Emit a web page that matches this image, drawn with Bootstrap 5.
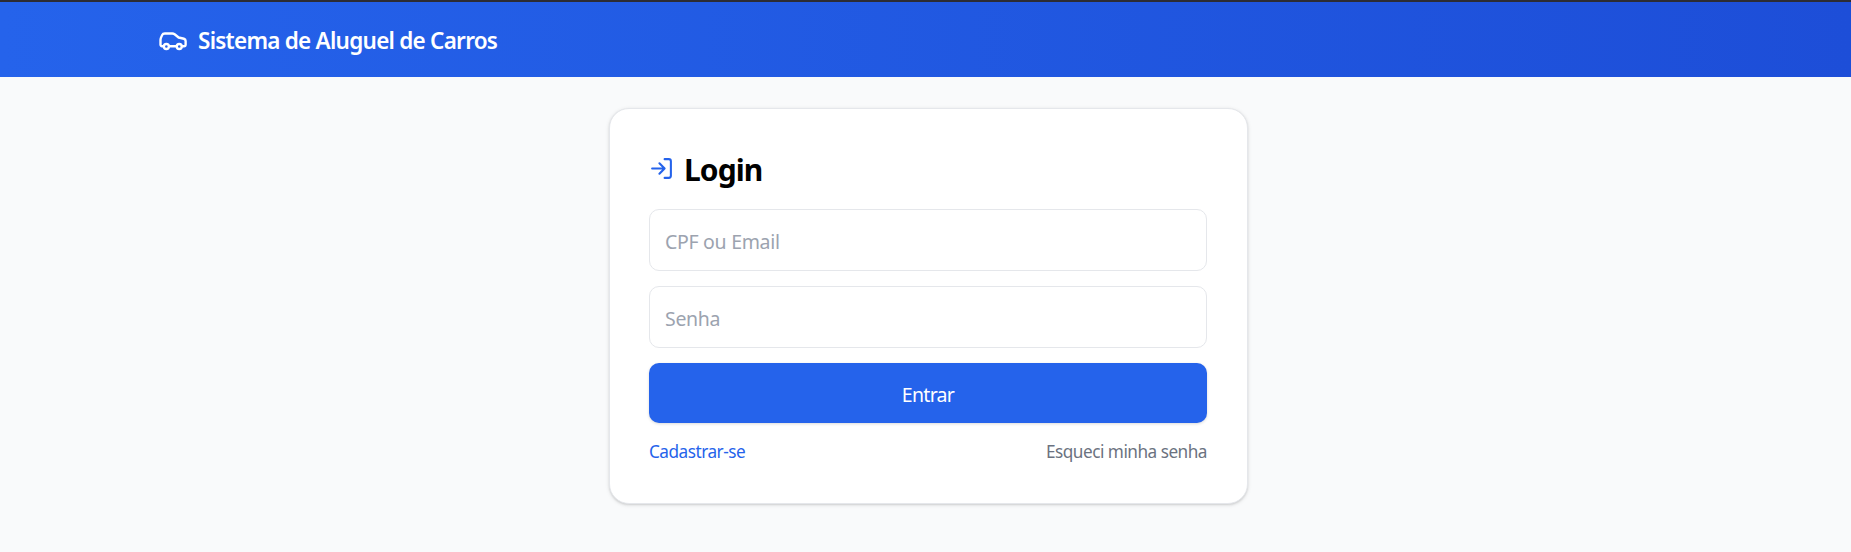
<!DOCTYPE html>
<html lang="pt-BR">
<head>
<meta charset="utf-8">
<meta name="viewport" content="width=device-width, initial-scale=1">
<title>Sistema de Aluguel de Carros</title>
<link href="https://cdn.jsdelivr.net/npm/bootstrap@5.3.0/dist/css/bootstrap.min.css" rel="stylesheet">
<style>
body { background: #f9fafb; font-family: "Segoe UI", "Noto Sans", sans-serif; font-size: 20px; min-height: 552px; }
.app-header { height: 77px; border-top: 2px solid #2c2c34; background: linear-gradient(90deg, #2563eb, #1d4ed8); padding-left: 158px; gap: 10px; }
.app-title { font-size: 22.5px; font-weight: 600; line-height: 30px; letter-spacing: -.75px; padding-top: 2px; }
.login-card { width: 639px; height: 396px; margin: 31px 0 0 608.5px; padding: 40px 39.5px; border: 1px solid #e5e7eb; border-radius: 20px; box-shadow: 0 1px 4px rgba(0,0,0,.1), 0 1px 2px rgba(0,0,0,.1); }
.login-title { font-size: 30px; font-weight: 700; line-height: 40px; color: #000; gap: 10px; margin-bottom: 20px; letter-spacing: -.9px; }
.login-title svg { color: #2563eb; margin-top: -2px; }
.login-title span { padding-top: 1px; margin-bottom: -1px; }
.login-form { gap: 15px; }
.login-form .form-control { height: 62px; padding: 3px 15px 0; font-size: 19.5px; border: 1px solid #e5e7eb; border-radius: 10px; letter-spacing: -.3px; }
.login-form .form-control::placeholder { color: #9ca3af; }
.btn-enter { height: 60px; padding: 3px 0 0; font-size: 19.5px; color: #fff; background: #2563eb; border: 0; border-radius: 10px; letter-spacing: -.7px; box-shadow: 0 1px 3px rgba(0,0,0,.15); }
.btn-enter:hover { background: #1d4ed8; color: #fff; }
.login-links { font-size: 17.2px; line-height: 25px; letter-spacing: -.5px; padding-top: 1px; }
.login-links a { color: #2563eb; }
.login-links a.forgot { color: #6b7280; }
</style>
</head>
<body>
<header class="app-header d-flex align-items-center text-white">
  <svg width="30" height="30" viewBox="0 0 24 24" fill="none" stroke="currentColor" stroke-width="1.9" stroke-linecap="round" stroke-linejoin="round" aria-hidden="true"><path d="M4.4 17H3.2a1.2 1.2 0 0 1-1.2-1.3V12c0-.7.1-1.2.4-1.9l1-2.2C3.8 7 4.5 6.8 5.4 6.8h6.1c.7 0 1.2.2 1.8.6l3.2 2.6 4.2 1c.9.3 1.4.9 1.4 1.8V15.6c0 .9-.5 1.4-1.3 1.4h-1.6M8.9 17h5.8"/><circle cx="6.7" cy="17.2" r="2"/><circle cx="17" cy="17.2" r="2"/></svg>
  <span class="app-title">Sistema de Aluguel de Carros</span>
</header>
<main>
  <section class="login-card bg-white">
    <h1 class="login-title d-flex align-items-center">
      <svg width="25" height="25" viewBox="0 0 24 24" fill="none" stroke="currentColor" stroke-width="2" stroke-linecap="round" stroke-linejoin="round" aria-hidden="true"><path d="M15 3h4a2 2 0 0 1 2 2v14a2 2 0 0 1-2 2h-4M10 17l5-5-5-5M15 12H3"/></svg>
      <span>Login</span>
    </h1>
    <form class="login-form d-flex flex-column">
      <input class="form-control" type="text" placeholder="CPF ou Email" aria-label="CPF ou Email">
      <input class="form-control" type="password" placeholder="Senha" aria-label="Senha">
      <button class="btn btn-enter w-100" type="button">Entrar</button>
      <div class="login-links d-flex justify-content-between">
        <a class="text-decoration-none" href="#">Cadastrar-se</a>
        <a class="forgot text-decoration-none" href="#">Esqueci minha senha</a>
      </div>
    </form>
  </section>
</main>
<script src="https://cdn.jsdelivr.net/npm/bootstrap@5.3.0/dist/js/bootstrap.bundle.min.js"></script>
</body>
</html>
